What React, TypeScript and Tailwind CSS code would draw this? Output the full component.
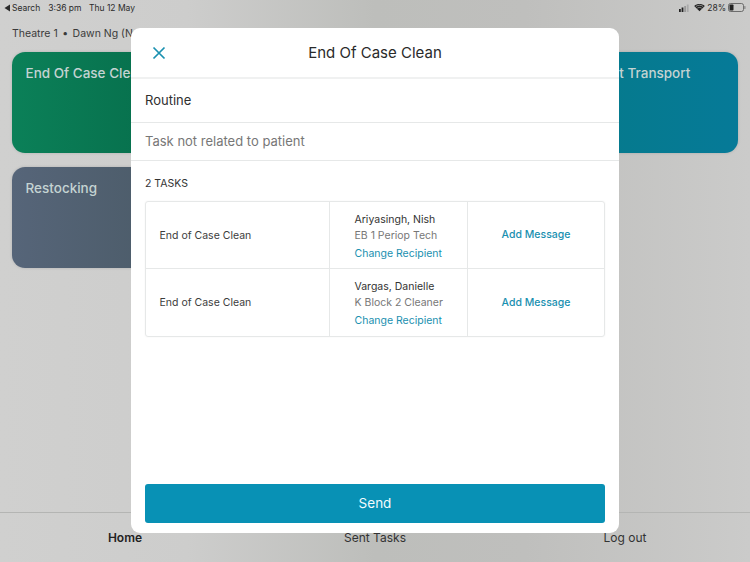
import React from "react";

const tasks = [
  { name: "Ariyasingh, Nish", role: "EB 1 Periop Tech" },
  { name: "Vargas, Danielle", role: "K Block 2 Cleaner" },
];

function StatusBar() {
  return (
    <div className="h-[14px] pt-[1px] flex items-center justify-between pl-[4px] pr-[4px] text-[8.5px] leading-[14px] text-[#2b2b2b]">
      <div className="flex items-center">
        <svg width="7" height="8" viewBox="0 0 7 8" className="mr-[1px]">
          <path d="M6 0.5V7.5L0.5 4Z" fill="#2b2b2b" />
        </svg>
        <span>Search</span>
        <span className="ml-[8px]">3:36 pm</span>
        <span className="ml-[7.5px]">Thu 12 May</span>
      </div>
      <div className="flex items-center">
        <svg width="10" height="8" viewBox="0 0 10 8">
          <rect x="0" y="5" width="1.8" height="3" fill="#222" />
          <rect x="2.6" y="3.5" width="1.8" height="4.5" fill="#222" />
          <rect x="5.2" y="2" width="1.8" height="6" fill="#999" />
          <rect x="7.8" y="0.5" width="1.8" height="7.5" fill="#aaa" />
        </svg>
        <svg width="11" height="9" viewBox="0 0 12 9" className="ml-[5px]">
          <path d="M6 8.6 0.2 2.8C3.4-.1 8.6-.1 11.8 2.8Z" fill="#222" />
          <path d="M2 3.4C4.4 1.6 7.6 1.6 10 3.4" stroke="#c8c8c6" strokeWidth="0.7" fill="none" />
          <path d="M3.6 5.2C5 4.2 7 4.2 8.4 5.2" stroke="#c8c8c6" strokeWidth="0.7" fill="none" />
        </svg>
        <span className="ml-[2px]">28%</span>
        <svg width="18" height="9" viewBox="0 0 18 9" className="ml-[2px]">
          <rect x="0.5" y="0.5" width="15" height="8" rx="2" fill="none" stroke="#555" strokeWidth="0.8" />
          <rect x="1.5" y="1.5" width="4" height="6" rx="0.8" fill="#222" />
          <rect x="16.4" y="3" width="1" height="3" rx="0.5" fill="#777" />
        </svg>
      </div>
    </div>
  );
}

function Card({ title, color }: { title: string; color: string }) {
  return (
    <div className={"h-[101px] rounded-[13px] pl-[13.5px] pt-[12px] text-[13.5px] leading-[18px] font-medium text-[#c4d3d2] whitespace-nowrap overflow-hidden shadow-[0_0_3px_rgba(0,0,0,0.15)] " + color}>
      {title}
    </div>
  );
}

function TaskRow({ name, role, last }: { name: string; role: string; last: boolean }) {
  return (
    <div className={"flex h-[67px] " + (last ? "" : "border-b border-[#e6e8e8]")}>
      <div className="w-[184px] flex items-center pl-[13.5px] pt-[1px] text-[10.5px] text-[#3c3c3c] border-r border-[#e6e8e8]">
        End of Case Clean
      </div>
      <div className="w-[138px] flex flex-col pl-[24.5px] pt-[10px] border-r border-[#e6e8e8] text-[10.5px] leading-[15px]">
        <span className="text-[#333]">{name}</span>
        <span className="text-[#777] mt-[1px]">{role}</span>
        <span className="text-[#1a90b0] mt-[3px]">Change Recipient</span>
      </div>
      <div className="flex-1 flex items-center justify-center text-[10.5px] font-medium text-[#1a90b0]">
        Add Message
      </div>
    </div>
  );
}

export default function App() {
  return (
    <div className="relative w-[750px] h-[562px] overflow-hidden flex flex-col bg-[linear-gradient(90deg,#d0d0cf_0%,#cdcdcc_25%,#bdbebb_50%,#bfbfbd_70%,#cbcbca_100%)] [font-family:Inter,'Noto_Sans',sans-serif]">
      <StatusBar />
      <div className="flex-1 flex flex-col px-[12px]">
        <div className="mt-[13px] h-[14px] text-[10.5px] leading-[14px] text-[#3a3a3a] whitespace-nowrap">
          Theatre 1<span className="mx-[4.5px]">•</span>Dawn Ng (Nurse)
        </div>
        <div className="mt-[11px] grid grid-cols-4 gap-x-[12px] gap-y-[14px]">
          <Card title="End Of Case Clean" color="bg-[linear-gradient(90deg,#0b8058,#066c4a)]" />
          <Card title="Linen" color="bg-[#0a7a5c]" />
          <Card title="Pickup" color="bg-[#05768f]" />
          <Card title="Patient Transport" color="bg-[linear-gradient(90deg,#057a8a,#067a98)]" />
          <Card title="Restocking" color="bg-[linear-gradient(90deg,#566579,#4a5a66)]" />
        </div>
      </div>
      <div className="h-[50px] border-t border-[#b4b5b3] flex items-start pt-[17px] text-[12px] leading-[16px] text-[#333]">
        <div className="flex-1 text-center font-semibold text-[#222]">Home</div>
        <div className="flex-1 text-center">Sent Tasks</div>
        <div className="flex-1 text-center">Log out</div>
      </div>

      <div className="absolute left-[131px] top-[28px] w-[488px] h-[505px] bg-white rounded-[9px] flex flex-col">
        <div className="relative h-[51px] pt-[1px] flex items-center justify-center border-b-2 border-[#f0f1f1] text-[15px] text-[#2a2a2a]">
          <svg width="14" height="14" viewBox="0 0 14 14" className="absolute left-[21px] top-[18px]">
            <path d="M1.5 1.5 12.5 12.5M12.5 1.5 1.5 12.5" stroke="#1a90b0" strokeWidth="1.7" fill="none" />
          </svg>
          End Of Case Clean
        </div>
        <div className="h-[44px] pt-[1px] flex items-center pl-[14px] border-b border-[#e6e8e8] text-[13px] text-[#2f2f2f]">
          Routine
        </div>
        <div className="h-[38px] pt-[1px] flex items-center pl-[14px] border-b border-[#e6e8e8] text-[13px] text-[#777]">
          Task not related to patient
        </div>
        <div className="pl-[14px] mt-[16px] h-[14px] text-[10.5px] leading-[14px] text-[#333]">2 TASKS</div>
        <div className="mx-[14px] mt-[10px] border border-[#e6e8e8] rounded-[3px] shadow-[0_0_2px_rgba(0,0,0,0.06)]">
          {tasks.map((t, i) => (
            <TaskRow key={t.name} name={t.name} role={t.role} last={i === tasks.length - 1} />
          ))}
        </div>
        <button className="mt-auto mx-[14px] mb-[10px] h-[39px] rounded-[3px] bg-[#0891b5] text-[#f2fbfd] text-[13.5px]">
          Send
        </button>
      </div>
    </div>
  );
}
